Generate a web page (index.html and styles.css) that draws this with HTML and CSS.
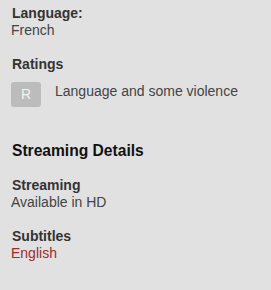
FILE: index.html
```html
<!DOCTYPE html>
<html lang="en">
<head>
    <meta charset="UTF-8">
    <meta name="viewport" content="width=device-width, initial-scale=1.0">
    <title>Movie Details</title>
    <link rel="stylesheet" href="styles.css">
</head>
<body>
    <div class="details">
        <div class="detail">
            <div class="label">Language:</div>
            <div class="value">French</div>
        </div>

        <div class="detail ratings">
            <div class="label">Ratings</div>
            <div class="rating">
                <span class="badge">R</span>
                <span class="reason">Language and some violence</span>
            </div>
        </div>

        <h2>Streaming Details</h2>

        <div class="detail">
            <div class="label">Streaming</div>
            <div class="value">Available in HD</div>
        </div>

        <div class="detail">
            <div class="label">Subtitles</div>
            <div class="value link">English</div>
        </div>
    </div>
</body>
</html>
```

FILE: styles.css
```css
body {
    font-family: 'Liberation Sans', Arial, sans-serif;
    margin: 0;
    padding: 0;
    background: #e1e1e1;
    color: #444;
}

.details {
    padding: 5px 11px 20px 11px;
}

.detail {
    font-size: 14px;
    line-height: 17px;
    margin-bottom: 17px;
}

.label {
    font-weight: bold;
    color: #333;
    padding-left: 1px;
}

.value {
    color: #444;
}

.value.link {
    color: #9e2b2b;
}

.ratings .label {
    margin-bottom: 9px;
}

.rating {
    display: flex;
    align-items: flex-start;
}

.badge {
    display: inline-block;
    width: 30px;
    height: 25px;
    line-height: 25px;
    text-align: center;
    background: #bcbcbc;
    color: #f2f2f2;
    border-radius: 3px;
    font-size: 14px;
}

.reason {
    margin-left: 14px;
    padding-top: 1px;
}

h2 {
    font-size: 15.6px;
    line-height: 20px;
    color: #111;
    margin: 34px 0 16px 1px;
}
```
